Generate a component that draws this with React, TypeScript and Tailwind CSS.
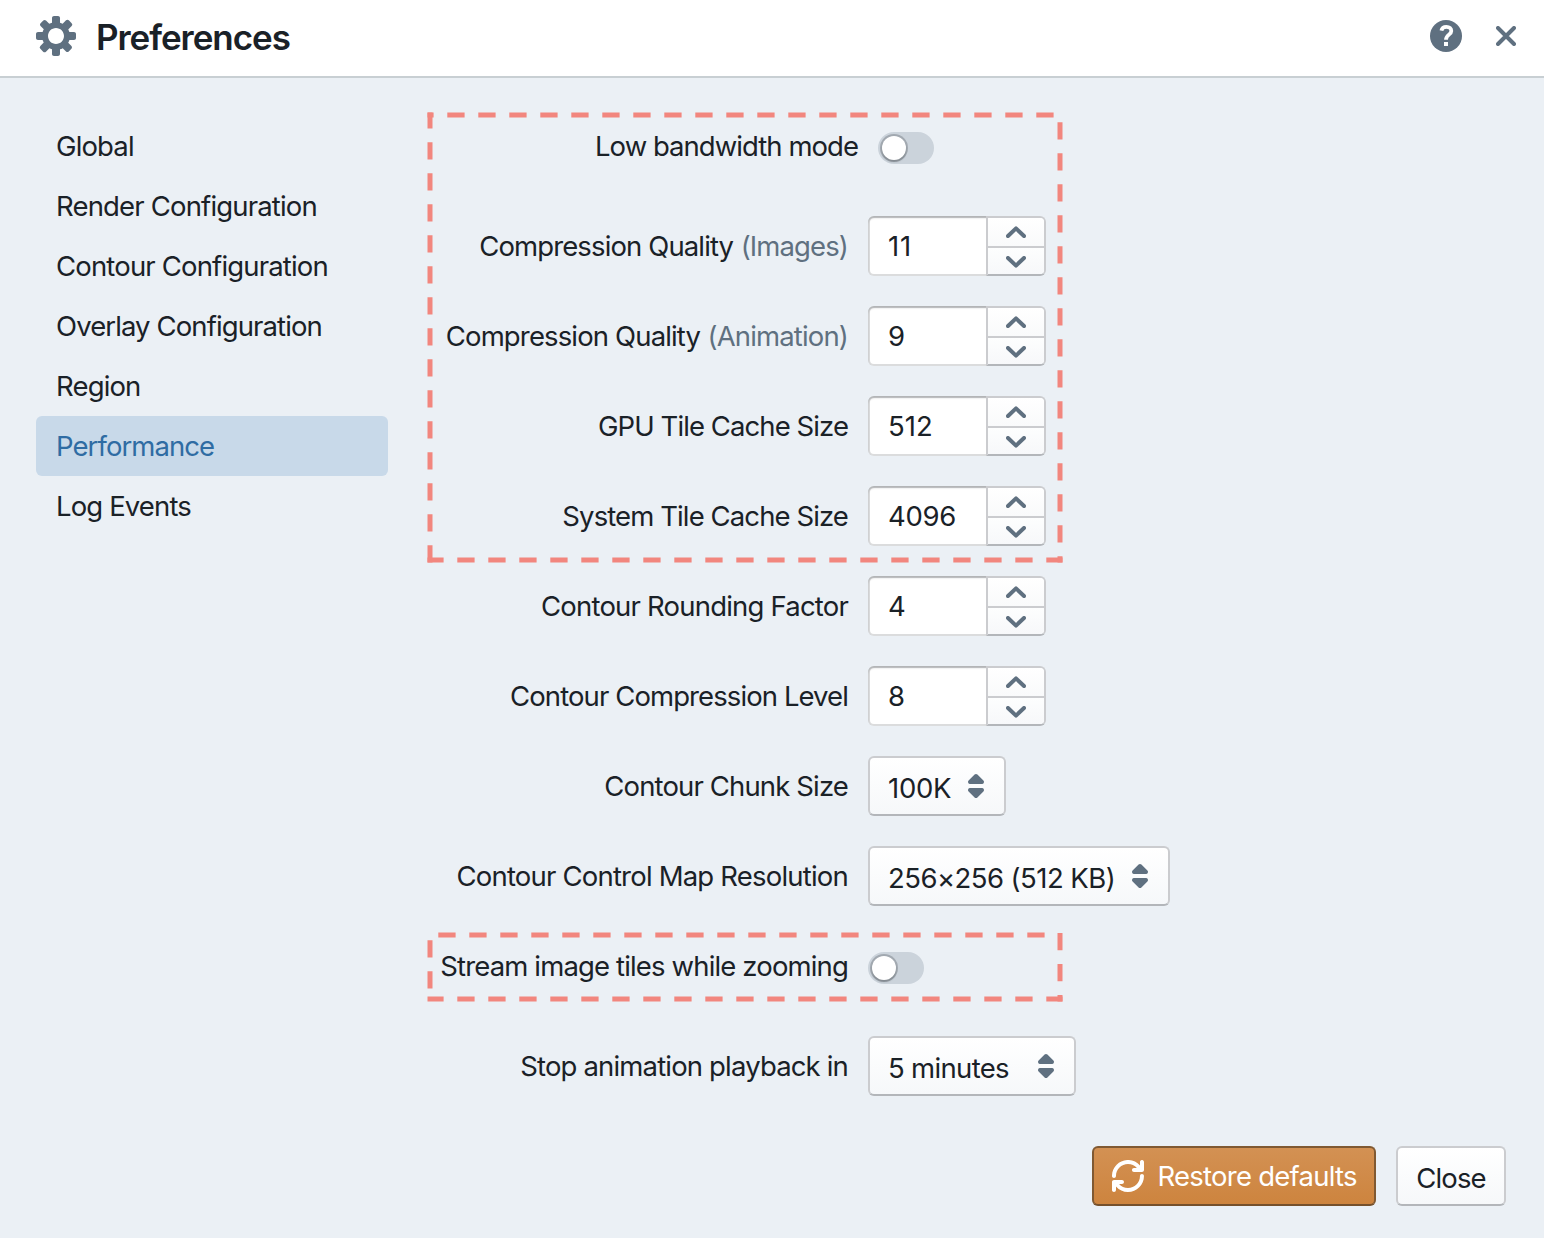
import React from "react";

type NavItem = { label: string; tracking: string; active?: boolean };

const NAV: NavItem[] = [
  { label: "Global", tracking: "tracking-[-0.85px]" },
  { label: "Render Configuration", tracking: "tracking-[-0.83px]" },
  { label: "Contour Configuration", tracking: "tracking-[-0.83px]" },
  { label: "Overlay Configuration", tracking: "tracking-[-0.89px]" },
  { label: "Region", tracking: "tracking-[-0.85px]" },
  { label: "Performance", tracking: "tracking-[-0.93px]", active: true },
  { label: "Log Events", tracking: "tracking-[-0.87px]" },
];

function CogIcon() {
  return (
    <svg className="size-10 fill-[#5f7080]" viewBox="0 0 20 20">
      <path d="M19 8h-2.31c-.14-.46-.33-.89-.56-1.3l1.7-1.7a.996.996 0 000-1.41l-1.41-1.41a.996.996 0 00-1.41 0l-1.7 1.7c-.41-.22-.84-.41-1.3-.55V1c0-.55-.45-1-1-1H9c-.55 0-1 .45-1 1v2.33c-.48.14-.94.34-1.37.58L5 2.28a.972.972 0 00-1.36 0L2.28 3.64c-.37.38-.37.99 0 1.36L3.9 6.62c-.24.44-.44.89-.59 1.38H1c-.55 0-1 .45-1 1v2c0 .55.45 1 1 1h2.31c.14.46.33.89.56 1.3L2.17 15a.996.996 0 000 1.41l1.41 1.41c.39.39 1.02.39 1.41 0l1.7-1.7c.41.22.84.41 1.3.55V19c0 .55.45 1 1 1h2c.55 0 1-.45 1-1v-2.33c.48-.14.94-.35 1.37-.59L15 17.72c.37.37.98.37 1.36 0l1.36-1.36c.37-.37.37-.98 0-1.36l-1.62-1.62c.24-.43.45-.89.6-1.38H19c.55 0 1-.45 1-1V9c0-.55-.45-1-1-1zm-9 6c-2.21 0-4-1.79-4-4s1.79-4 4-4 4 1.79 4 4-1.79 4-4 4z" />
    </svg>
  );
}

function HelpIcon() {
  return (
    <svg className="size-8" viewBox="0 0 16 16">
      <circle cx="8" cy="8" r="8" fill="#5f7080" />
      <path d="M5.7 5.3C5.95 4.1 6.85 3.4 8.2 3.4c1.5 0 2.45.8 2.45 2.05C10.65 7.4 8 7.3 8 9.9" fill="none" stroke="#fff" strokeWidth="1.9" />
      <rect x="7" y="11" width="2" height="2" fill="#fff" />
    </svg>
  );
}

function CrossIcon() {
  return (
    <svg className="size-5" viewBox="0 0 20 20" fill="none" stroke="#5f7080" strokeWidth="4" strokeLinecap="round">
      <path d="M2 2l16 16M18 2L2 18" />
    </svg>
  );
}

function RefreshIcon() {
  return (
    <svg className="size-8 shrink-0 fill-white" viewBox="0 0 16 16">
      <path d="M14.99 6.99c-.55 0-1 .45-1 1 0 3.31-2.69 6-6 6-1.77 0-3.36-.78-4.46-2h1.46c.55 0 1-.45 1-1s-.45-1-1-1h-4c-.55 0-1 .45-1 1v4c0 .55.45 1 1 1s1-.45 1-1v-1.74a7.95 7.95 0 006 2.74c4.42 0 8-3.58 8-8 0-.55-.45-1-1-1zm0-7c-.55 0-1 .45-1 1v1.74a7.95 7.95 0 00-6-2.74c-4.42 0-8 3.58-8 8 0 .55.45 1 1 1s1-.45 1-1c0-3.31 2.69-6 6-6 1.77 0 3.36.78 4.46 2h-1.46c-.55 0-1 .45-1 1s.45 1 1 1h4c.55 0 1-.45 1-1v-4c0-.55-.45-1-1-1z" />
    </svg>
  );
}

function Chevron({ down = false }: { down?: boolean }) {
  return (
    <svg className="h-3 w-5" viewBox="0 0 20 12" fill="none" stroke="#5f7080" strokeWidth="4" strokeLinecap="round" strokeLinejoin="round">
      <path d={down ? "M2 2l8 7.6L18 2" : "M2 10l8-7.6L18 10"} />
    </svg>
  );
}

function Row({ label, tracking, hint, className = "", children }: {
  label: string;
  tracking: string;
  hint?: string;
  className?: string;
  children: React.ReactNode;
}) {
  return (
    <div className={"flex h-[60px] items-center gap-5 " + className}>
      <div className={"flex w-[420px] shrink-0 justify-end gap-[7.5px] whitespace-nowrap " + tracking}>
        <span>{label}</span>
        {hint && <span className="text-[#5f7080]">{hint}</span>}
      </div>
      {children}
    </div>
  );
}

function Toggle() {
  return (
    <button className="mt-1 flex h-8 w-14 items-center rounded-full bg-[#cbd3db] px-1">
      <span className="size-6 rounded-full bg-white shadow-[0_0_0_2px_rgba(16,22,26,0.22),0_2px_2px_rgba(16,22,26,0.22)]" />
    </button>
  );
}

function NumberInput({ value, tracking = "" }: { value: string; tracking?: string }) {
  return (
    <div className="flex h-[60px]">
      <div className={"flex w-[120px] items-center rounded-l-md bg-white pl-5 shadow-[inset_0_0_0_2px_rgba(16,22,26,0.15),inset_0_2px_2px_rgba(16,22,26,0.2)] " + tracking}>
        {value}
      </div>
      <div className="z-10 -ml-0.5 flex w-[60px] flex-col rounded-r-md border-2 border-[#cbcccf] border-b-[#b3b6ba] bg-[#f8fafb]">
        <button className="flex h-[30px] items-center justify-center rounded-tr border-b-2 border-[#cbcccf] bg-linear-to-b from-white to-[#f9fafb]">
          <Chevron />
        </button>
        <button className="flex h-[26px] items-center justify-center rounded-br bg-linear-to-b from-[#fdfefe] to-[#f7f8fa] pt-0.5">
          <Chevron down />
        </button>
      </div>
    </div>
  );
}

const RAISED = "rounded-md border-2 border-[#cbcccf] border-b-[#b3b6ba] bg-linear-to-b from-white to-[#f6f8fa]";

function Select({ value, width, tracking }: { value: string; width: string; tracking: string }) {
  return (
    <button className={"flex h-[60px] items-center justify-between whitespace-nowrap pr-3 pl-[18px] " + RAISED + " " + width + " " + tracking}>
      <span className="pt-1">{value}</span>
      <svg className="size-8 shrink-0 fill-[#5f7080]" viewBox="0 0 16 16">
        <path d="M5 7h6a1.003 1.003 0 00.71-1.71l-3-3C8.53 2.11 8.28 2 8 2s-.53.11-.71.29l-3 3A1.003 1.003 0 005 7zm6 2H5a1.003 1.003 0 00-.71 1.71l3 3c.18.18.43.29.71.29s.53-.11.71-.29l3-3A1.003 1.003 0 0011 9z" />
      </svg>
    </button>
  );
}

/* Dashed outlines that call out the two groups of settings. */
function Callouts() {
  return (
    <svg className="pointer-events-none absolute inset-0" width="1544" height="1238" fill="none" stroke="#f2867e" strokeWidth="5" strokeDasharray="17.3 13.7">
      <path d="M427.5 115H1053.7" strokeDashoffset="11.2" />
      <path d="M1060 122.3V562.5" />
      <path d="M427.5 560H1062.5" strokeDashoffset="1.2" />
      <path d="M430 112.5V562.5" strokeDashoffset="1.2" />
      <path d="M438.3 935H1044.7" />
      <path d="M1060 933V1001.5" />
      <path d="M427.5 999H1062.5" strokeDashoffset="1.2" />
      <path d="M430 940.3V988.7" />
    </svg>
  );
}

export default function App() {
  return (
    <div className="relative flex h-[1238px] w-[1544px] flex-col overflow-hidden bg-[#ebf0f5] font-['Inter',sans-serif] text-[27.5px] leading-9 text-[#1a2127]">
      <header className="flex h-[78px] shrink-0 items-center border-b-2 border-[#c8cfd3] bg-white pr-7 pb-1 pl-9">
        <CogIcon />
        <h1 className="mt-0.5 ml-5 flex-1 text-[35px] font-semibold tracking-[-1.05px]">Preferences</h1>
        <HelpIcon />
        <button className="ml-[34px]">
          <CrossIcon />
        </button>
      </header>

      <div className="flex pt-[38px] pl-9">
        <nav className="flex w-[352px] shrink-0 flex-col">
          {NAV.map((n) => (
            <a
              key={n.label}
              className={"flex h-[60px] items-center rounded-md pl-5 " + n.tracking + (n.active ? " bg-[#c8d9e9] text-[#2f6ca3]" : "")}
            >
              {n.label}
            </a>
          ))}
        </nav>

        <main className="ml-10 flex flex-col gap-[30px]">
          <Row label="Low bandwidth mode" tracking="tracking-[-0.96px]" className="mb-2.5 ml-2.5"><Toggle /></Row>
          <Row label="Compression Quality" hint="(Images)" tracking="tracking-[-0.88px]"><NumberInput value="11" tracking="tracking-[0.8px]" /></Row>
          <Row label="Compression Quality" hint="(Animation)" tracking="tracking-[-0.86px]"><NumberInput value="9" /></Row>
          <Row label="GPU Tile Cache Size" tracking="tracking-[-0.92px]"><NumberInput value="512" /></Row>
          <Row label="System Tile Cache Size" tracking="tracking-[-0.9px]"><NumberInput value="4096" tracking="tracking-[-0.3px]" /></Row>
          <Row label="Contour Rounding Factor" tracking="tracking-[-0.8px]"><NumberInput value="4" /></Row>
          <Row label="Contour Compression Level" tracking="tracking-[-0.91px]"><NumberInput value="8" /></Row>
          <Row label="Contour Chunk Size" tracking="tracking-[-0.86px]"><Select value="100K" width="w-[138px]" tracking="tracking-[-0.3px]" /></Row>
          <Row label="Contour Control Map Resolution" tracking="tracking-[-0.8px]"><Select value="256×256 (512 KB)" width="w-[302px]" tracking="tracking-[-0.55px]" /></Row>
          <Row label="Stream image tiles while zooming" tracking="tracking-[-0.85px]" className="mb-2.5"><Toggle /></Row>
          <Row label="Stop animation playback in" tracking="tracking-[-0.84px]"><Select value="5 minutes" width="w-[208px]" tracking="tracking-[-0.68px]" /></Row>
        </main>
      </div>

      <footer className="mt-[50px] flex justify-end gap-5 pr-[38px]">
        <button className="flex h-[60px] w-[284px] items-center gap-[13.5px] rounded-md border-2 border-[#805932] border-b-[#75502b] bg-linear-to-b from-[#d39153] to-[#cd843e] pl-[18px] tracking-[-0.75px] whitespace-nowrap text-white">
          <RefreshIcon />
          Restore defaults
        </button>
        <button className={"flex h-[60px] w-[110px] items-center justify-center pt-1 tracking-[-0.9px] " + RAISED}>Close</button>
      </footer>

      <Callouts />
    </div>
  );
}
